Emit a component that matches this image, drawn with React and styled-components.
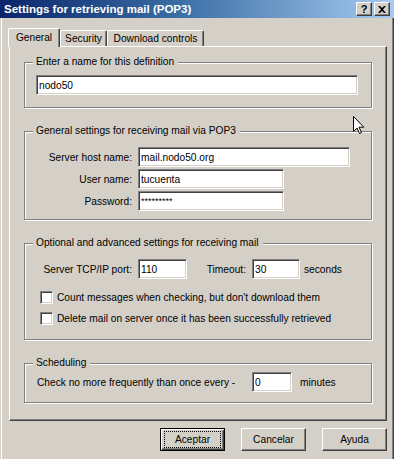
import React from 'react';
import styled, { createGlobalStyle } from 'styled-components';

const GlobalStyle = createGlobalStyle`
  body {
    margin: 0;
    background: #d4d0c8;
    font-family: "Liberation Sans", Arial, sans-serif;
    font-size: 10.2px;
    color: #000;
  }
`;

const Window = styled.div`
  position: relative;
  width: 394px;
  height: 459px;
  display: flex;
  flex-direction: column;
  background: #d4d0c8;
  overflow: hidden;
`;

const TitleBar = styled.div`
  height: 18px;
  display: flex;
  align-items: center;
  padding: 0 4px 0 4px;
  background: linear-gradient(to right, #0a246a 0%, #3a6ea5 45%, #a6caf0 100%);
`;

const Title = styled.div`
  color: #fff;
  font-weight: bold;
  font-size: 11.5px;
  white-space: nowrap;
`;

const CaptionButtons = styled.div`
  margin-left: auto;
  display: flex;
  gap: 2px;
`;

const CaptionButton = styled.div`
  width: 16px;
  height: 14px;
  box-sizing: border-box;
  display: flex;
  align-items: center;
  justify-content: center;
  background: #d4d0c8;
  border: 1px solid;
  border-color: #fff #404040 #404040 #fff;
  box-shadow: inset -1px -1px 0 #808080;
  font-weight: bold;
  font-size: 11px;
  line-height: 12px;
`;

const Body = styled.div`
  flex: 1;
  display: flex;
  flex-direction: column;
  padding: 10px 7px 0 8px;
  border-left: 1px solid #d4d0c8;
  box-shadow: inset 1px 0 0 #fff, inset -1px 0 0 #404040, inset -2px 0 0 #808080;
`;

const Tabs = styled.div`
  display: flex;
  align-items: flex-end;
  height: 18px;
  margin-left: -1px;
`;

const Tab = styled.div`
  position: relative;
  z-index: ${p => (p.$active ? 1 : 0)};
  width: ${p => p.$w}px;
  height: ${p => (p.$active ? 19 : 16)}px;
  margin-bottom: ${p => (p.$active ? -1 : 0)}px;
  box-sizing: border-box;
  display: flex;
  align-items: center;
  justify-content: center;
  padding-bottom: ${p => (p.$active ? 2 : 0)}px;
  background: #d4d0c8;
  border-top: 1px solid #fff;
  border-left: 1px solid #fff;
  border-right: 1px solid #404040;
  border-radius: 2px 2px 0 0;
  box-shadow: inset -1px 0 0 #808080;
  white-space: nowrap;
`;

const Panel = styled.div`
  height: 375px;
  box-sizing: border-box;
  display: flex;
  flex-direction: column;
  gap: 17px;
  padding: 9px 14px 0 14px;
  border: 1px solid;
  border-color: #fff #404040 #404040 #fff;
  box-shadow: inset -1px -1px 0 #808080;
`;

const Group = styled.fieldset`
  margin: 0;
  min-width: 0;
  padding: 0 0 ${p => p.$pb}px 0;
  border: 1px solid #808080;
  box-shadow: inset 1px 1px 0 #fff, 1px 1px 0 #fff;
`;

const Legend = styled.legend`
  margin-left: 8px;
  padding: 0 4px 0 3px;
  line-height: 12px;
  background: #d4d0c8;
`;

const Field = styled.input`
  display: block;
  width: ${p => p.$w}px;
  height: 20px;
  box-sizing: border-box;
  margin: 0;
  padding: 0 2px;
  font: inherit;
  font-size: ${p => (p.$secret ? 9 : 10.2)}px;
  color: #000;
  background: #fff;
  border: 1px solid;
  border-color: #808080 #fff #fff #808080;
  box-shadow: inset 1px 1px 0 #404040, inset -1px -1px 0 #d4d0c8;
  outline: none;
`;

const NameRow = styled.div`
  margin: 7px 0 0 11px;
`;

const FormGrid = styled.div`
  display: grid;
  grid-template-columns: 107px auto;
  column-gap: 6px;
  row-gap: 2px;
  align-items: center;
  margin-top: 10px;
  justify-items: start;
`;

const Label = styled.span`
  width: ${p => (p.$w ? `${p.$w}px` : 'auto')};
  text-align: ${p => (p.$left ? 'left' : 'right')};
  justify-self: end;
  white-space: nowrap;
`;

const Row = styled.div`
  display: flex;
  align-items: center;
  gap: 6px;
  margin: ${p => p.$m || '0'};
  white-space: nowrap;
`;

const Unit = styled.span`
  margin-left: ${p => p.$ml}px;
`;

const CheckRow = styled.label`
  display: flex;
  align-items: center;
  gap: 4px;
  height: 13px;
  margin: ${p => p.$m};
  white-space: nowrap;
`;

const Check = styled.span`
  width: 13px;
  height: 13px;
  box-sizing: border-box;
  background: #fff;
  border: 1px solid;
  border-color: #808080 #fff #fff #808080;
  box-shadow: inset 1px 1px 0 #404040, inset -1px -1px 0 #d4d0c8;
`;

const Footer = styled.div`
  display: flex;
  justify-content: flex-end;
  gap: 16px;
  margin-top: 7px;
`;

const Button = styled.div`
  width: 65px;
  height: 23px;
  box-sizing: border-box;
  display: flex;
  align-items: center;
  justify-content: center;
  background: #d4d0c8;
  border: 1px solid;
  border-color: ${p => (p.$default ? '#000' : '#fff #404040 #404040 #fff')};
  box-shadow: ${p =>
    p.$default
      ? 'inset 1px 1px 0 #fff, inset -1px -1px 0 #404040, inset -2px -2px 0 #808080'
      : 'inset -1px -1px 0 #808080'};
`;

const Focus = styled.span`
  display: flex;
  align-items: center;
  justify-content: center;
  width: 55px;
  height: 15px;
  border: 1px dotted #000;
`;

const Cursor = styled.svg`
  position: absolute;
  left: 353px;
  top: 116px;
`;

export default function App() {
  return (
    <Window>
      <GlobalStyle />
      <TitleBar>
        <Title>Settings for retrieving mail (POP3)</Title>
        <CaptionButtons>
          <CaptionButton>?</CaptionButton>
          <CaptionButton>
            <svg width="8" height="7" viewBox="0 0 8 7">
              <path d="M0 0h2l2 2 2-2h2L5 3.5 8 7H6L4 5 2 7H0l3-3.5z" fill="#000" />
            </svg>
          </CaptionButton>
        </CaptionButtons>
      </TitleBar>
      <Body>
        <Tabs>
          <Tab $active $w={52}>General</Tab>
          <Tab $w={47}>Security</Tab>
          <Tab $w={97}>Download controls</Tab>
        </Tabs>
        <Panel>
          <Group $pb={12}>
            <Legend>Enter a name for this definition</Legend>
            <NameRow>
              <Field $w={322} defaultValue="nodo50" readOnly />
            </NameRow>
          </Group>

          <Group $pb={8}>
            <Legend>General settings for receiving mail via POP3</Legend>
            <FormGrid>
              <Label>Server host name:</Label>
              <Field $w={212} defaultValue="mail.nodo50.org" readOnly />
              <Label>User name:</Label>
              <Field $w={146} defaultValue="tucuenta" readOnly />
              <Label>Password:</Label>
              <Field $w={146} $secret defaultValue="*********" readOnly />
            </FormGrid>
          </Group>

          <Group $pb={14}>
            <Legend>Optional and advanced settings for receiving mail</Legend>
            <Row $m="10px 0 0 0">
              <Label $w={107}>Server TCP/IP port:</Label>
              <Field $w={49} defaultValue="110" readOnly />
              <Label $w={53}>Timeout:</Label>
              <Field $w={48} defaultValue="30" readOnly />
              <Unit $ml={-2}>seconds</Unit>
            </Row>
            <CheckRow $m="12px 0 0 15px">
              <Check />
              Count messages when checking, but don't download them
            </CheckRow>
            <CheckRow $m="8px 0 0 15px">
              <Check />
              Delete mail on server once it has been successfully retrieved
            </CheckRow>
          </Group>

          <Group $pb={10}>
            <Legend>Scheduling</Legend>
            <Row $m="3px 0 0 12px">
              <Label $w={209} $left>Check no more frequently than once every -</Label>
              <Field $w={40} defaultValue="0" readOnly />
              <Unit $ml={2}>minutes</Unit>
            </Row>
          </Group>
        </Panel>
        <Footer>
          <Button $default>
            <Focus>Aceptar</Focus>
          </Button>
          <Button>Cancelar</Button>
          <Button>Ayuda</Button>
        </Footer>
      </Body>
      <Cursor width="12" height="19" viewBox="0 0 12 19">
        <path d="M0.5 0.5V15.5L4 12L6.5 17.5L8.5 16.6L6 11.2H10.8Z" fill="#fff" stroke="#000" strokeWidth="1" strokeLinejoin="miter" />
      </Cursor>
    </Window>
  );
}
